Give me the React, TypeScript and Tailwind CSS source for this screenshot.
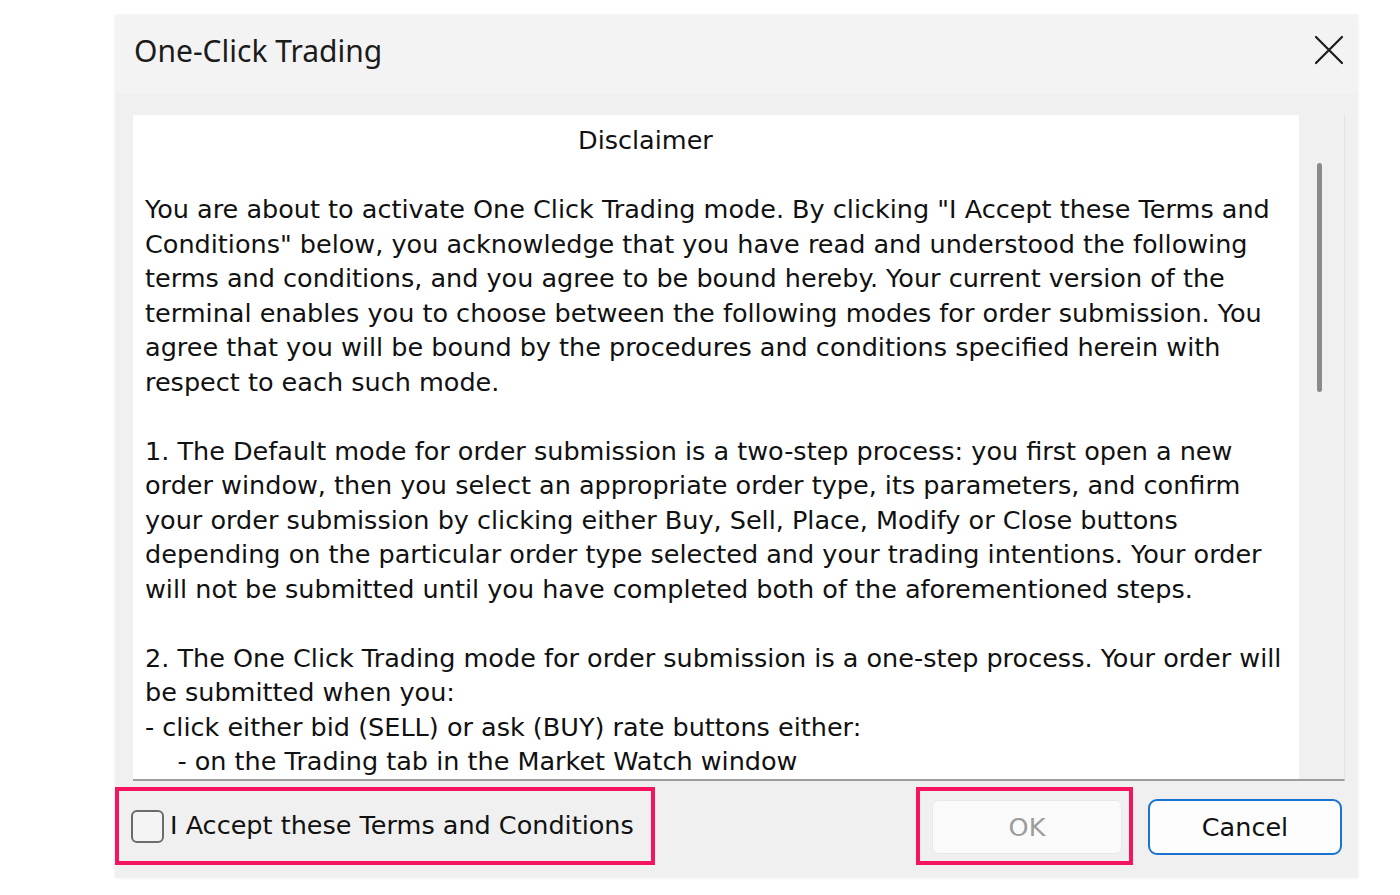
import React from "react";

const p1 = [
  'You are about to activate One Click Trading mode. By clicking "I Accept these Terms and',
  'Conditions" below, you acknowledge that you have read and understood the following',
  "terms and conditions, and you agree to be bound hereby. Your current version of the",
  "terminal enables you to choose between the following modes for order submission. You",
  "agree that you will be bound by the procedures and conditions specified herein with",
  "respect to each such mode.",
];
const p2 = [
  "1. The Default mode for order submission is a two-step process: you first open a new",
  "order window, then you select an appropriate order type, its parameters, and confirm",
  "your order submission by clicking either Buy, Sell, Place, Modify or Close buttons",
  "depending on the particular order type selected and your trading intentions. Your order",
  "will not be submitted until you have completed both of the aforementioned steps.",
];
const p3 = [
  "2. The One Click Trading mode for order submission is a one-step process. Your order will",
  "be submitted when you:",
  "- click either bid (SELL) or ask (BUY) rate buttons either:",
  "\u00a0\u00a0\u00a0\u00a0- on the Trading tab in the Market Watch window",
  "- click either bid (SELL) or ask (BUY) rate buttons in the One Click Trading panel",
];

function Line({ t }: { t: string }) {
  return <div className="h-[34.5px] leading-[34.5px] whitespace-pre">{t}</div>;
}

export default function App() {
  const font = { fontFamily: '"DejaVu Sans", Verdana, sans-serif' };
  return (
    <div className="w-full h-[895px] bg-white pt-[15px] pl-[115px]">
      <div className="w-[1243px] h-[863px] flex flex-col bg-[#f0f0f0] shadow-[0_0_3px_rgba(0,0,0,0.08)]">
        {/* Title bar */}
        <div className="h-[78px] shrink-0 bg-[#f3f3f3] flex items-center justify-between pl-[19px] pr-[14px]">
          <div
            className="text-[30px] text-[#1b1b1b] leading-none pb-[6px]"
            style={{ fontFamily: '"Noto Sans", "Open Sans", sans-serif' }}
          >
            One-Click Trading
          </div>
          <svg width="30" height="30" viewBox="0 0 30 30" className="mb-[8px]">
            <path d="M2 2 L28 28 M28 2 L2 28" stroke="#1b1b1b" strokeWidth="2.2" strokeLinecap="round" />
          </svg>
        </div>
        {/* Body */}
        <div className="h-[688px] shrink-0 flex flex-col pt-[22px] pl-[18px] pr-[13px]">
          <div className="h-[666px] bg-white flex border-b-2 border-b-[#9d9d9d] border-r border-r-[#e4e4e4] overflow-hidden">
            <div
              className="flex-1 overflow-hidden pt-[8px] pl-[12px] text-[25.5px] text-[#111]"
              style={font}
            >
              <div className="h-[34.5px] leading-[34.5px] pl-[433px]">Disclaimer</div>
              <Line t="" />
              {p1.map((t, i) => (
                <Line key={"a" + i} t={t} />
              ))}
              <Line t="" />
              {p2.map((t, i) => (
                <Line key={"b" + i} t={t} />
              ))}
              <Line t="" />
              {p3.map((t, i) => (
                <Line key={"c" + i} t={t} />
              ))}
            </div>
            <div className="w-[45px] bg-[#f0f0f0] pt-[48px] pl-[18px]">
              <div className="w-[5px] h-[229px] rounded-full bg-[#8a8a8a]" />
            </div>
          </div>
        </div>
        {/* Bottom row */}
        <div className="h-[97px] shrink-0 flex items-start pt-[6px] text-[25.5px]" style={font}>
          <div className="w-[540px] h-[78px] border-4 border-[#f5145f] flex items-center pl-[12px] gap-[6px]">
            <div className="w-[33px] h-[33px] rounded-[6px] border-2 border-[#6b6b6b] bg-[#f4f4f4]" />
            <span className="text-[#111] pb-[2px]">I Accept these Terms and Conditions</span>
          </div>
          <div className="w-[261px]" />
          <div className="w-[217px] h-[78px] border-4 border-[#f5145f] flex items-center pl-[12px]">
            <div className="w-[190px] h-[54px] mt-[2px] rounded-[6px] bg-[#fafafa] border border-[#e8e8e8] flex items-center justify-center text-[#9c9c9c]">
              OK
            </div>
          </div>
          <div className="ml-[15px] mt-[12px] w-[194px] h-[56px] rounded-[9px] border-2 border-[#1a73d1] bg-[#fdfdfd] flex items-center justify-center text-[#111]">
            Cancel
          </div>
        </div>
      </div>
    </div>
  );
}
